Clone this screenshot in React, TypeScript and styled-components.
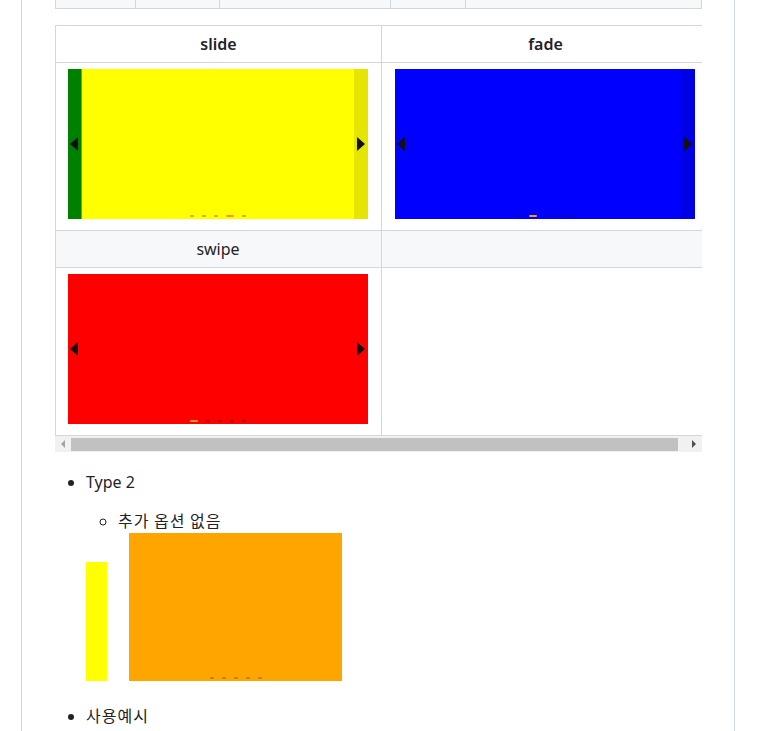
import React from "react";
import styled, { createGlobalStyle } from "styled-components";

const GlobalStyle = createGlobalStyle`
  body {
    margin: 0;
    background: #ffffff;
    color: #1f2328;
    font-family: "Noto Sans", "Noto Sans CJK KR", sans-serif;
    font-size: 16px;
    line-height: 1.5;
  }
`;

const Page = styled.div`
  margin-left: 21px;
  width: 647px;
  min-height: 731px;
  padding: 0 32px 0 33px;
  border-left: 1px solid #d0d7de;
  border-right: 1px solid #d0d7de;
  box-sizing: content-box;
`;

const TableTail = styled.div`
  display: flex;
  height: 8px;
  border-bottom: 1px solid #d0d7de;
  background: #f6f8fa;
  margin-bottom: 16px;
`;

const TailCell = styled.div<{ $w: number }>`
  width: ${(p) => p.$w}px;
  border-left: 1px solid #d0d7de;
  box-sizing: border-box;
  &:last-child {
    border-right: 1px solid #d0d7de;
  }
`;

const Scroller = styled.div`
  width: 647px;
  overflow: hidden;
`;

// the horizontal scrollbar under the wide table, as the browser drew it
const ScrollBar = styled.div`
  display: flex;
  align-items: center;
  width: 647px;
  height: 16px;
  background: #f1f1f1;
`;

const ScrollButton = styled.div<{ $dir: "left" | "right" }>`
  display: flex;
  align-items: center;
  justify-content: center;
  width: 16px;
  height: 16px;
  flex: none;
  &::before {
    content: "";
    width: 0;
    height: 0;
    border-top: 4px solid transparent;
    border-bottom: 4px solid transparent;
    ${(p) =>
      p.$dir === "left"
        ? "border-right: 4px solid #a3a3a3;"
        : "border-left: 4px solid #505050;"}
  }
`;

const Thumb = styled.div`
  width: 607px;
  height: 13px;
  background: #c1c1c1;
`;

const TrackRest = styled.div`
  flex: 1;
`;

const Table = styled.table`
  border-collapse: collapse;
  width: 654px;
  table-layout: fixed;
`;

const Th = styled.th`
  padding: 6px 13px;
  border: 1px solid #d0d7de;
  font-weight: 600;
  text-align: center;
`;

const Td = styled.td<{ $striped?: boolean }>`
  padding: 6px 13px 11px;
  border: 1px solid #d0d7de;
  text-align: center;
  vertical-align: top;
  background: ${(p) => (p.$striped ? "#f6f8fa" : "#ffffff")};
  &:first-child {
    padding-left: 12px;
  }
`;

const LabelTd = styled(Td)`
  padding: 6px 13px;
`;

const Carousel = styled.div<{ $bg: string }>`
  position: relative;
  width: 300px;
  height: 150px;
  background: ${(p) => p.$bg};
  overflow: hidden;
`;

const Peek = styled.div<{ $bg: string }>`
  position: absolute;
  left: 0;
  top: 0;
  bottom: 0;
  width: 13px;
  background: ${(p) => p.$bg};
  border-right: 1px solid rgba(255, 255, 0, 0.4);
`;

const Hover = styled.div`
  position: absolute;
  right: 0;
  top: 0;
  bottom: 0;
  width: 14px;
  background: rgba(0, 0, 0, 0.1);
`;

const Arrow = styled.span<{ $side: "left" | "right" }>`
  position: absolute;
  top: 68px;
  ${(p) => (p.$side === "left" ? "left: 2px;" : "right: 3px;")}
  width: 0;
  height: 0;
  border-top: 7px solid transparent;
  border-bottom: 7px solid transparent;
  ${(p) =>
    p.$side === "left"
      ? "border-right: 8px solid #111;"
      : "border-left: 8px solid #111;"}
`;

const Dots = styled.div`
  position: absolute;
  left: 0;
  right: 0;
  bottom: 2px;
  display: flex;
  justify-content: center;
  gap: 8px;
`;

const Dot = styled.span<{ $active?: boolean; $tone: string }>`
  width: ${(p) => (p.$active ? 8 : 4)}px;
  height: 2px;
  border-radius: 1px;
  background: ${(p) => (p.$active ? "#f39c12" : p.$tone)};
`;

function DotRow({ active, tone }: { active: number; tone: string }) {
  return (
    <Dots>
      {[0, 1, 2, 3, 4].map((i) => (
        <Dot key={i} $active={i === active} $tone={tone} />
      ))}
    </Dots>
  );
}

const List = styled.ul<{ $circle?: boolean }>`
  margin: 18px 0 0;
  padding-left: 31px;
  list-style-type: ${(p) => (p.$circle ? "circle" : "disc")};
`;

const Item = styled.li`
  margin-top: 0;
`;

const SubList = styled(List)`
  margin-top: 14px;
  padding-left: 32px;
`;

const Strip = styled.div`
  display: flex;
  align-items: flex-end;
  gap: 22px;
  margin-bottom: 22px;
`;

const Block = styled.div<{ $bg: string; $w: number; $h: number }>`
  position: relative;
  width: ${(p) => p.$w}px;
  height: ${(p) => p.$h}px;
  background: ${(p) => p.$bg};
`;

const Korean = styled.span`
  font-family: "Noto Sans CJK KR", sans-serif;
  letter-spacing: 1px;
`;

export default function App() {
  return (
    <>
      <GlobalStyle />
      <Page>
        <TableTail>
          {[80, 84, 171, 75, 237].map((w, i) => (
            <TailCell key={i} $w={w} />
          ))}
        </TableTail>

        <Scroller>
          <Table>
            <colgroup>
              <col style={{ width: 326 }} />
              <col style={{ width: 328 }} />
            </colgroup>
            <thead>
              <tr>
                <Th>slide</Th>
                <Th>fade</Th>
              </tr>
            </thead>
            <tbody>
              <tr>
                <Td>
                  <Carousel $bg="#ffff00">
                    <Peek $bg="#008000" />
                    <Hover />
                    <Arrow $side="left" />
                    <Arrow $side="right" />
                    <DotRow active={3} tone="rgba(160,120,0,0.55)" />
                  </Carousel>
                </Td>
                <Td>
                  <Carousel $bg="#0000ff">
                    <Hover />
                    <Arrow $side="left" />
                    <Arrow $side="right" />
                    <DotRow active={1} tone="rgba(0,0,0,0.3)" />
                  </Carousel>
                </Td>
              </tr>
              <tr>
                <LabelTd $striped>swipe</LabelTd>
                <LabelTd $striped />
              </tr>
              <tr>
                <Td>
                  <Carousel $bg="#ff0000">
                    <Arrow $side="left" />
                    <Arrow $side="right" />
                    <DotRow active={0} tone="rgba(0,0,0,0.3)" />
                  </Carousel>
                </Td>
                <Td />
              </tr>
            </tbody>
          </Table>
        </Scroller>
        <ScrollBar>
          <ScrollButton $dir="left" />
          <Thumb />
          <TrackRest />
          <ScrollButton $dir="right" />
        </ScrollBar>

        <List>
          <Item>
            Type 2
            <SubList $circle>
              <Item>
                <Korean>추가 옵션 없음</Korean>
              </Item>
            </SubList>
            <Strip>
              <Block $bg="#ffff00" $w={21} $h={119} />
              <Block $bg="#ffa500" $w={213} $h={148}>
                <DotRow active={-1} tone="rgba(120,80,0,0.45)" />
              </Block>
            </Strip>
          </Item>
          <Item>
            <Korean>사용예시</Korean>
          </Item>
        </List>
      </Page>
    </>
  );
}
